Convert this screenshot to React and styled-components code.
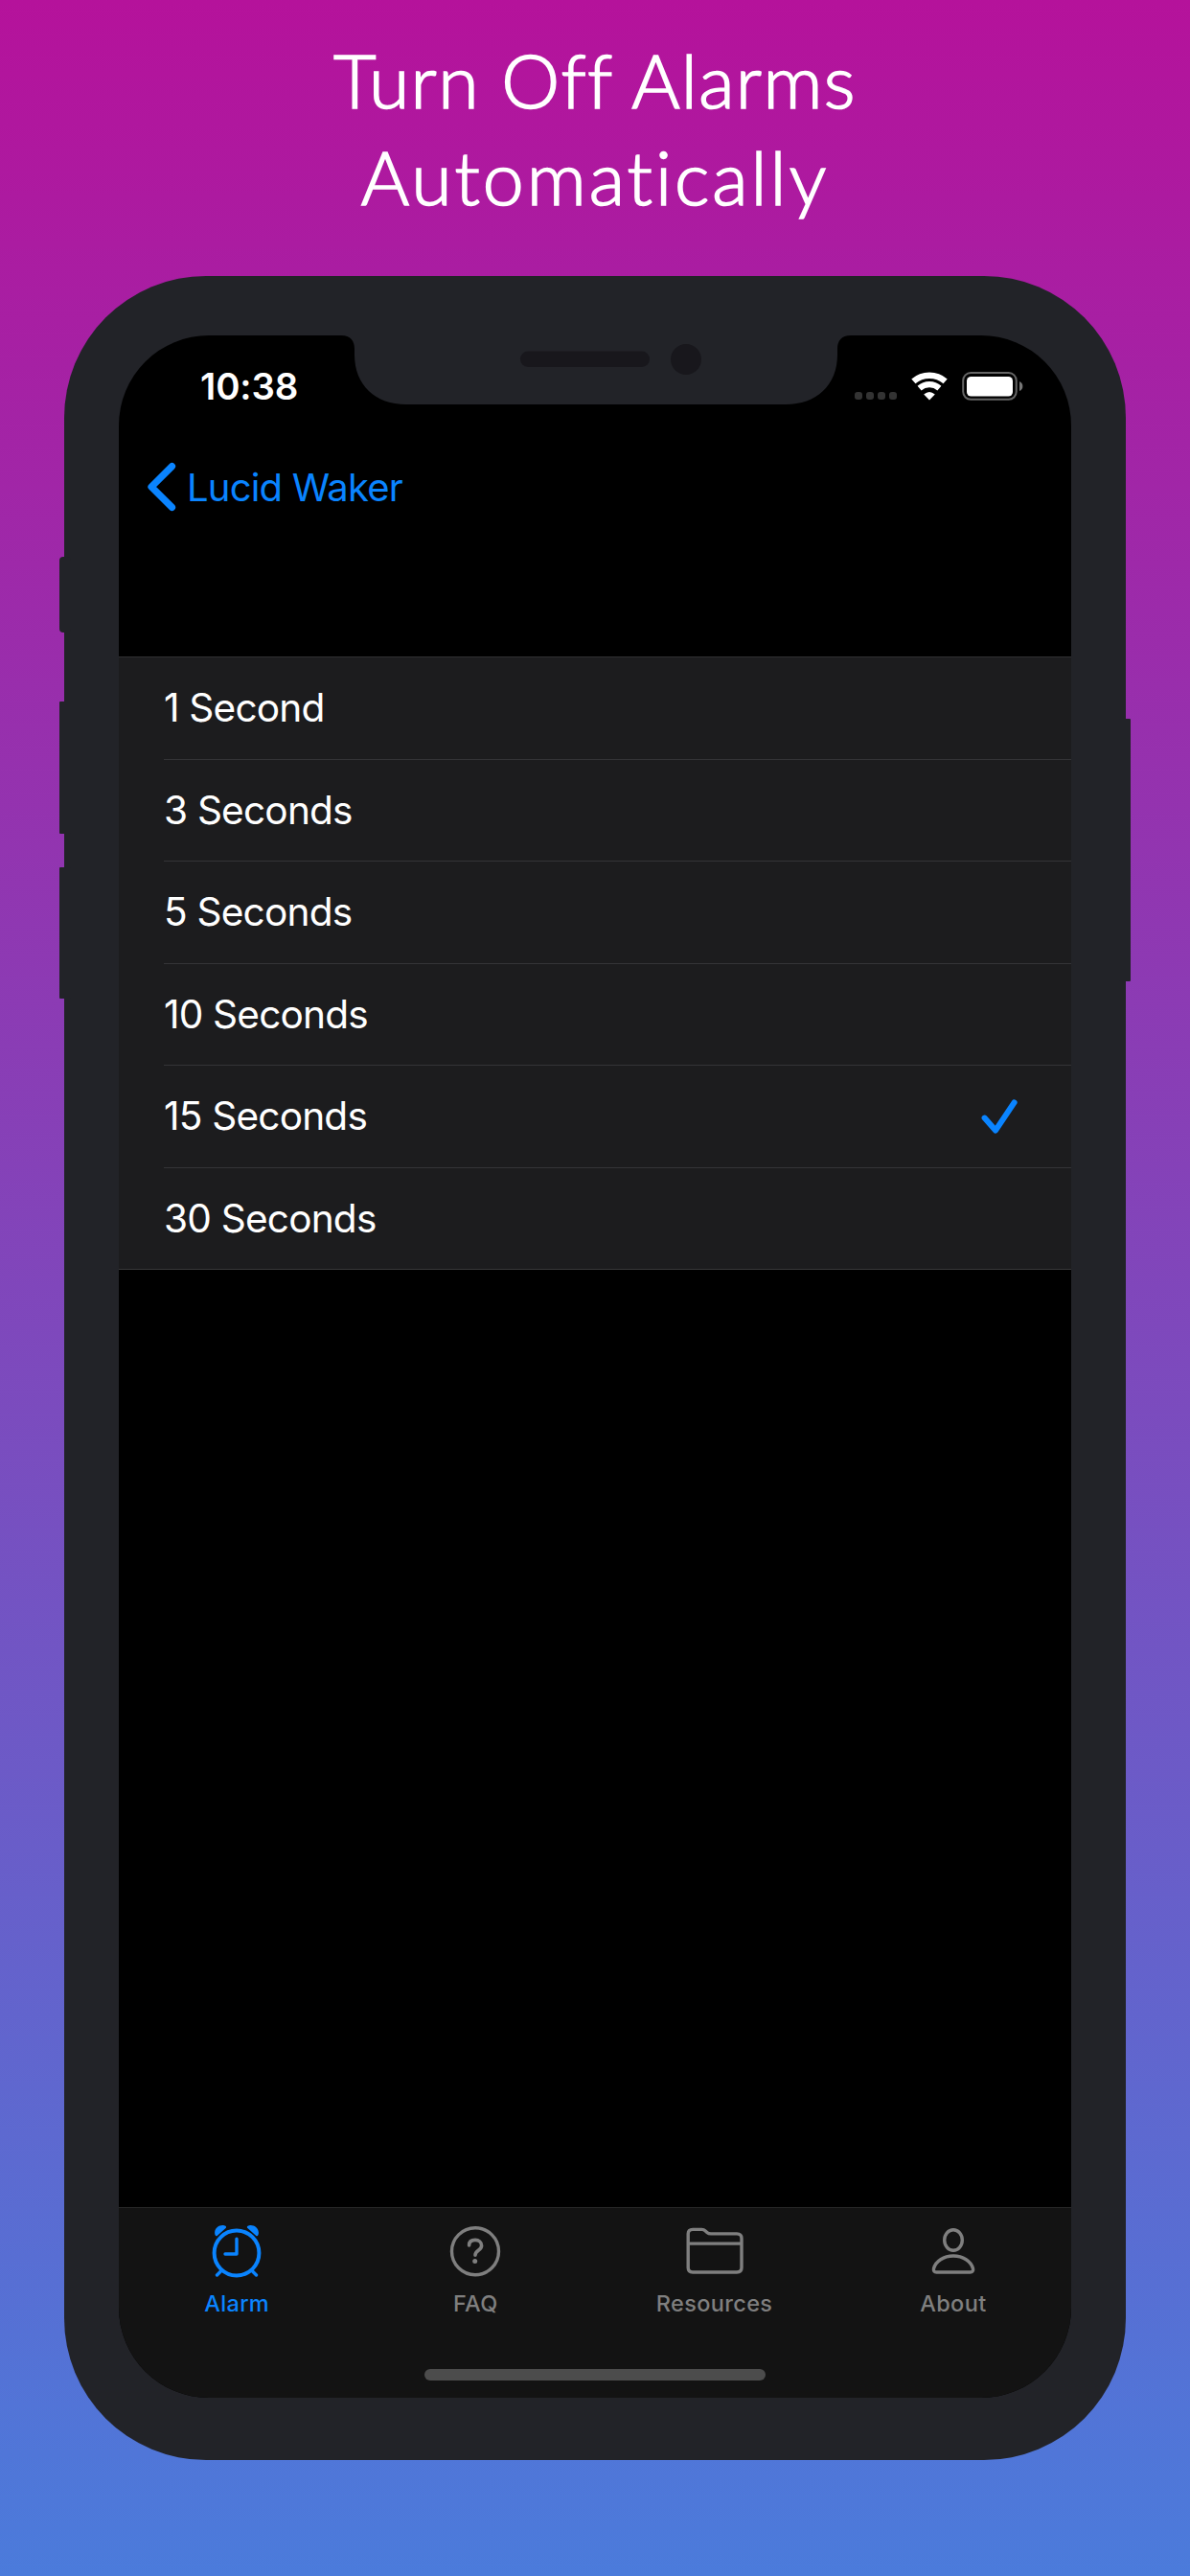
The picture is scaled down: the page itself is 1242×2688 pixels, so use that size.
import React from "react";
import styled, { createGlobalStyle } from "styled-components";

const BLUE = "#0a84ff";
const BODY = "#222328";
const GREY = "#7f7f7f";

const Global = createGlobalStyle`
  html, body { margin: 0; padding: 0; }
  * { box-sizing: border-box; }
`;

const Page = styled.main`
  width: 1242px;
  height: 2688px;
  overflow: hidden;
  display: flex;
  flex-direction: column;
  align-items: center;
  background: linear-gradient(180deg, #b5129b 0%, #4b7bdb 100%);
  font-family: Inter, "Liberation Sans", sans-serif;
`;

const Headline = styled.h1`
  height: 288px;
  margin: 0;
  padding-top: 33px;
  display: flex;
  flex-direction: column;
  align-items: center;
  color: #fff;
  font: 300 77px/101px Lato, "Open Sans", sans-serif;
  -webkit-text-stroke: 1.7px #fff;
`;

const HeadLine = styled.span`
  white-space: nowrap;
  letter-spacing: ${(p) => p.$track}px;
`;

const Phone = styled.div`
  position: relative;
  width: 1108px;
  height: 2279px;
  padding: 62px 57px 65px;
  border-radius: 148px;
  background: ${BODY};
`;

const SideButton = styled.i`
  position: absolute;
  ${(p) => p.$side}: -5px;
  top: ${(p) => p.$top}px;
  width: 12px;
  height: ${(p) => p.$height}px;
  border-radius: ${(p) => p.$radius || 1}px;
  background: ${BODY};
`;

const Screen = styled.div`
  width: 994px;
  height: 2152px;
  border-radius: 94px;
  overflow: hidden;
  display: flex;
  flex-direction: column;
  background: #000;
`;

const StatusBar = styled.header`
  height: 108px;
  flex: none;
  display: flex;
  align-items: flex-start;
`;

const Time = styled.time`
  width: 246px;
  padding: 30px 0 0 85px;
  color: #fff;
  font-size: 38.4px;
  line-height: 46px;
  font-weight: 600;
  letter-spacing: -0.1px;
`;

const NotchShape = styled.svg`
  display: block;
  flex: none;
  width: 532px;
  height: 72px;
  margin-left: -14px;
`;

const StatusIcons = styled.svg`
  display: block;
  flex: none;
  width: 180px;
  height: 32px;
  margin: 37px 0 0 2px;
`;

const NavBar = styled.nav`
  height: 227px;
  flex: none;
  padding: 23px 0 0 28px;
  display: flex;
  align-items: flex-start;
`;

const BackLink = styled.a`
  display: flex;
  align-items: center;
  height: 54px;
  gap: 9px;
  color: ${BLUE};
  font-size: 40px;
  letter-spacing: -0.8px;
`;

const List = styled.ul`
  list-style: none;
  margin: 0;
  padding: 0 0 0 47px;
  flex: none;
  background: #1c1c1e;
  border-top: 1px solid #303032;
  border-bottom: 1px solid #39393b;
`;

const Option = styled.li`
  height: 106.5px;
  padding: 1px 56px 0 0;
  display: flex;
  align-items: center;
  justify-content: space-between;
  color: #fff;
  font-size: 40.6px;
  line-height: 48px;
  letter-spacing: -0.8px;
  &:first-child { height: 105.5px; }
  & + & { border-top: 1px solid #343437; }
`;

const TabBar = styled.footer`
  height: 199px;
  margin-top: auto;
  flex: none;
  display: flex;
  flex-direction: column;
  align-items: center;
  justify-content: space-between;
  padding-bottom: 18px;
  background: #131313;
  border-top: 1px solid #262626;
`;

const Tabs = styled.div`
  display: flex;
  flex: none;
  width: 997px;
`;

const Tab = styled.button`
  flex: 1;
  border: 0;
  padding: 14px 0 0;
  background: none;
  display: flex;
  flex-direction: column;
  align-items: center;
  gap: 7px;
  color: ${(p) => (p.$active ? BLUE : GREY)};
  font: 500 23.5px/30px Inter, "Liberation Sans", sans-serif;
  letter-spacing: 0.35px;
`;

const HomeBar = styled.div`
  width: 356px;
  height: 12px;
  border-radius: 6px;
  background: #4c4c4c;
`;

const TabIcon = ({ children }) => (
  <svg width="64" height="64" viewBox="0 0 64 64" fill="none" stroke="currentColor" strokeWidth="3.4" strokeLinecap="round" strokeLinejoin="round">
    {children}
  </svg>
);

const BELL = "M11.4 15.2C9.8 15.9 9 13.5 9.1 11.5C9.5 6.5 14 3.7 18 4.1C20.8 4.4 22 6 20.6 7.1Z";

const AlarmIcon = () => (
  <TabIcon>
    <circle cx="32" cy="33" r="23.4" strokeWidth="4" />
    <path d="M32 18.3V34H20" />
    <path d="M16.5 51 11.5 56M47.5 51 52.5 56" />
    <path d={BELL} fill="currentColor" stroke="none" />
    <path d={BELL} transform="matrix(-1 0 0 1 64 0)" fill="currentColor" stroke="none" />
  </TabIcon>
);

const QuestionIcon = () => (
  <TabIcon>
    <circle cx="32" cy="31.2" r="24.5" />
    <path d="M25.6 24.9C25.6 21.2 28.3 19.4 32 19.4C35.8 19.4 38.6 21.8 38.6 25.2C38.6 30.4 32 30.2 32 35.2" strokeWidth="3.6" />
    <circle cx="31.7" cy="41.5" r="2.5" fill="currentColor" stroke="none" />
  </TabIcon>
);

const FolderIcon = () => (
  <TabIcon>
    <path d="M4.2 13Q4.2 8.4 9 8.4H18.4Q20.6 8.4 22.3 10L24.2 11.7Q25.6 12.9 28 12.9H55Q60 12.9 60 17.7V48.3Q60 53 55 53H9Q4.2 53 4.2 48.3Z" />
    <path d="M4.2 23.1H60" strokeLinecap="butt" />
  </TabIcon>
);

const PersonIcon = () => (
  <TabIcon>
    <ellipse cx="32" cy="19.5" rx="9.3" ry="10.8" />
    <path d="M14.5 53H49.5Q53.2 53 52.5 49.2C50.5 41.5 42 36 32 36S13.5 41.5 11.5 49.2Q10.8 53 14.5 53Z" />
  </TabIcon>
);

const Notch = () => (
  <NotchShape viewBox="0 0 532 72">
    <path d="M0 0C10 0 14 6 14 14V20C14 52 36 72 68 72H464C496 72 518 52 518 20V14C518 6 522 0 532 0Z" fill={BODY} />
    <rect x="187" y="16.5" width="135" height="16.5" rx="8.2" fill="#18171c" />
    <circle cx="360" cy="25" r="16" fill="#18171c" />
  </NotchShape>
);

const Status = () => (
  <StatusIcons viewBox="0 0 180 32">
    <g fill="#333">
      <rect x="2" y="22" width="8" height="8" rx="3" />
      <rect x="14" y="22" width="8" height="8" rx="3" />
      <rect x="26" y="22" width="8" height="8" rx="3" />
      <rect x="38" y="22" width="8" height="8" rx="3" />
    </g>
    <g fill="none" stroke="#fff">
      <path d="M63.4 10.9A25.3 25.3 0 0 1 96.6 10.9" strokeWidth="6.4" />
      <path d="M69.6 18.1A15.8 15.8 0 0 1 90.4 18.1" strokeWidth="6.2" />
    </g>
    <path d="M80 30.4 74.2 24.6Q80 19.2 85.8 24.6Z" fill="#fff" />
    <rect x="115.2" y="2" width="55.5" height="27.8" rx="8" fill="none" stroke="#666" strokeWidth="2" />
    <rect x="119" y="6" width="48" height="20.5" rx="4.5" fill="#fff" />
    <path d="M174 11Q177.4 12.5 177.4 16T174 21Z" fill="#777" />
  </StatusIcons>
);

const BackArrow = () => (
  <svg width="34" height="54" viewBox="0 0 34 54" fill="none" stroke="currentColor" strokeWidth="7.2" strokeLinecap="round" strokeLinejoin="round">
    <path d="M27.5 5.6 6 27 27.5 48.4" />
  </svg>
);

const Check = () => (
  <svg width="38" height="38" viewBox="0 0 38 38" fill="none" stroke={BLUE} strokeWidth="6" strokeLinecap="round" strokeLinejoin="round">
    <path d="M3.6 20.6 15 33.6 34.6 4.4" />
  </svg>
);

const OPTIONS = ["1 Second", "3 Seconds", "5 Seconds", "10 Seconds", "15 Seconds", "30 Seconds"];

const TABS = [
  ["Alarm", AlarmIcon],
  ["FAQ", QuestionIcon],
  ["Resources", FolderIcon],
  ["About", PersonIcon],
];

export default function App() {
  return (
    <Page>
      <Global />
      <Headline>
        <HeadLine $track={1.4}>Turn Off Alarms</HeadLine>
        <HeadLine $track={3}>Automatically</HeadLine>
      </Headline>
      <Phone>
        <SideButton $side="left" $top={293} $height={79} $radius={4} />
        <SideButton $side="left" $top={444} $height={138} />
        <SideButton $side="left" $top={617} $height={137} />
        <SideButton $side="right" $top={462} $height={274} />
        <Screen>
          <StatusBar>
            <Time>10:38</Time>
            <Notch />
            <Status />
          </StatusBar>
          <NavBar>
            <BackLink>
              <BackArrow />
              Lucid Waker
            </BackLink>
          </NavBar>
          <List>
            {OPTIONS.map((label) => (
              <Option key={label}>
                {label}
                {label === "15 Seconds" && <Check />}
              </Option>
            ))}
          </List>
          <TabBar>
            <Tabs>
              {TABS.map(([label, Icon]) => (
                <Tab key={label} $active={label === "Alarm"}>
                  <Icon />
                  {label}
                </Tab>
              ))}
            </Tabs>
            <HomeBar />
          </TabBar>
        </Screen>
      </Phone>
    </Page>
  );
}
